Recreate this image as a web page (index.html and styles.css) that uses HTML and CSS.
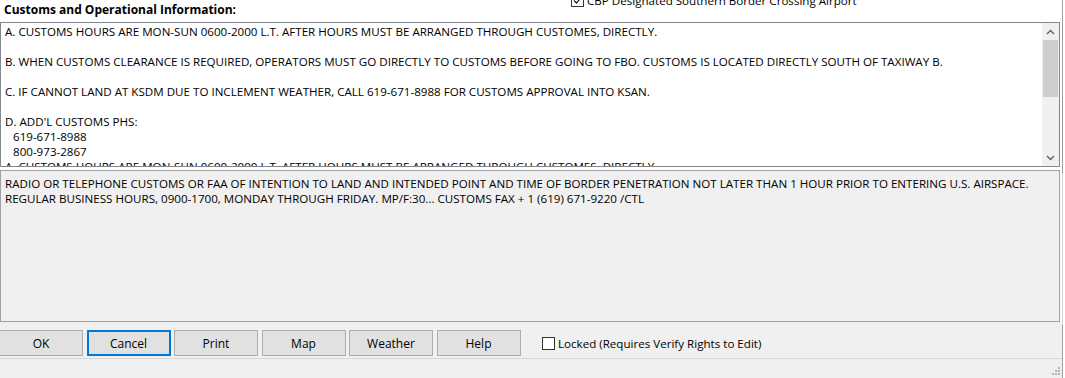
FILE: index.html
```html
<!DOCTYPE html>
<html>
<head>
<meta charset="utf-8">
<link rel="stylesheet" href="styles.css">
</head>
<body>
<div class="window">
  <div class="header">
    <span class="title">Customs and Operational Information:</span>
    <label class="cbp">
      <span class="box"><svg width="11" height="11" viewBox="0 0 11 11"><path d="M2 5.5 L4.5 8 L9 2.5" fill="none" stroke="#222" stroke-width="1.2"/></svg></span>
      <span>CBP Designated Southern Border Crossing Airport</span>
    </label>
  </div>
  <div class="memo">
    <div class="memo-text">
      <div class="line">A. CUSTOMS HOURS ARE MON-SUN 0600-2000 L.T. AFTER HOURS MUST BE ARRANGED THROUGH CUSTOMES, DIRECTLY.</div>
      <div class="line">&nbsp;</div>
      <div class="line">B. WHEN CUSTOMS CLEARANCE IS REQUIRED, OPERATORS MUST GO DIRECTLY TO CUSTOMS BEFORE GOING TO FBO. CUSTOMS IS LOCATED DIRECTLY SOUTH OF TAXIWAY B.</div>
      <div class="line">&nbsp;</div>
      <div class="line">C. IF CANNOT LAND AT KSDM DUE TO INCLEMENT WEATHER, CALL 619-671-8988 FOR CUSTOMS APPROVAL INTO KSAN.</div>
      <div class="line">&nbsp;</div>
      <div class="line">D. ADD'L CUSTOMS PHS:</div>
      <div class="line indent">619-671-8988</div>
      <div class="line indent">800-973-2867</div>
      <div class="line">A. CUSTOMS HOURS ARE MON-SUN 0600-2000 L.T. AFTER HOURS MUST BE ARRANGED THROUGH CUSTOMES, DIRECTLY.</div>
    </div>
    <div class="scrollbar">
      <div class="arrow"><svg width="9" height="6" viewBox="0 0 9 6"><path d="M1 5 L4.5 1.5 L8 5" fill="none" stroke="#606060" stroke-width="1.4"/></svg></div>
      <div class="track"><div class="thumb"></div></div>
      <div class="arrow"><svg width="9" height="6" viewBox="0 0 9 6"><path d="M1 1 L4.5 4.5 L8 1" fill="none" stroke="#606060" stroke-width="1.4"/></svg></div>
    </div>
  </div>
  <div class="remarks-wrap">
    <div class="remarks">
      <div class="line">RADIO OR TELEPHONE CUSTOMS OR FAA OF INTENTION TO LAND AND INTENDED POINT AND TIME OF BORDER PENETRATION NOT LATER THAN 1 HOUR PRIOR TO ENTERING U.S. AIRSPACE.</div>
      <div class="line">REGULAR BUSINESS HOURS, 0900-1700, MONDAY THROUGH FRIDAY. MP/F:30... CUSTOMS FAX + 1 (619) 671-9220 /CTL</div>
    </div>
  </div>
  <div class="buttons">
    <button class="btn">OK</button>
    <button class="btn focus">Cancel</button>
    <button class="btn">Print</button>
    <button class="btn">Map</button>
    <button class="btn">Weather</button>
    <button class="btn">Help</button>
    <label class="locked"><span class="box"></span><span>Locked (Requires Verify Rights to Edit)</span></label>
  </div>
  <div class="status">
    <div class="grip">
      <i class="d1"></i><i class="d2"></i><i class="d3"></i><i class="d4"></i><i class="d5"></i><i class="d6"></i>
    </div>
  </div>
</div>
</body>
</html>
```
FILE: styles.css
```css
html, body {
  margin: 0;
  padding: 0;
  background: #ffffff;
}
body {
  width: 1065px;
  height: 378px;
  overflow: hidden;
  font-family: "Open Sans", "Noto Sans", sans-serif;
  font-size: 11.6px;
  color: #000;
}
.window {
  width: 1062px;
  height: 378px;
  border-right: 1px solid #a0a0a0;
  display: flex;
  flex-direction: column;
}
.header {
  height: 22px;
  flex: none;
  display: flex;
  align-items: flex-start;
  background: #fff;
}
.title {
  font-weight: bold;
  font-size: 12px;
  margin-left: 4px;
  margin-top: 2px;
  line-height: 16px;
  width: 567px;
}
.cbp {
  display: flex;
  align-items: center;
  margin-top: -7px;
  line-height: 15px;
}
.cbp .box {
  width: 11px;
  height: 11px;
  border: 1px solid #333;
  margin-right: 3px;
  display: flex;
  background: #fff;
}
.memo {
  flex: none;
  height: 143px;
  width: 1058px;
  border: 1px solid #828790;
  background: #fff;
  display: flex;
}
.memo-text {
  flex: 1;
  padding: 1px 0 0 4px;
  overflow: hidden;
}
.line {
  line-height: 15px;
  white-space: nowrap;
}
.indent {
  padding-left: 8px;
}
.scrollbar {
  width: 17px;
  background: #f0f0f0;
  display: flex;
  flex-direction: column;
}
.arrow {
  height: 17px;
  display: flex;
  align-items: center;
  justify-content: center;
}
.track {
  flex: 1;
  padding: 0 1px;
}
.thumb {
  height: 57px;
  background: #cdcdcd;
}
.remarks-wrap {
  flex: none;
  background: #fff;
  padding-top: 3px;
  width: 1062px;
}
.remarks {
  height: 145px;
  width: 1054px;
  border: 1px solid #a0a0a0;
  background: #f0f0f0;
  padding: 5px 0 0 4px;
  box-shadow: 1px 1px 0 #fff, 2px 2px 0 #fff, 3px 3px 0 #d4d4d4;
}
.buttons {
  flex: none;
  height: 28px;
  padding-top: 8px;
  background: #f0f0f0;
  display: flex;
  align-items: flex-start;
  gap: 3.5px;
  margin-left: -1px;
}
.btn {
  width: 84px;
  height: 26px;
  margin: 0;
  padding: 0;
  background: #e1e1e1;
  border: 1px solid #adadad;
  font-family: inherit;
  font-size: 12px;
  color: #000;
}
.btn.focus {
  border: 2px solid #0078d7;
}
.locked {
  display: flex;
  align-items: center;
  height: 26px;
  margin-left: 18px;
}
.locked .box {
  width: 11px;
  height: 11px;
  border: 1px solid #333;
  background: #fff;
  margin-right: 3px;
}
.status {
  flex: 1;
  border-top: 1px solid #d7d7d7;
  background: #f0f0f0;
  position: relative;
}
.grip {
  position: absolute;
  right: 2px;
  bottom: 3px;
  width: 8px;
  height: 8px;
}
.grip i {
  position: absolute;
  width: 2px;
  height: 2px;
  background: #b4b4b4;
}
.grip .d1 { right: 0; bottom: 6px; }
.grip .d2 { right: 0; bottom: 3px; }
.grip .d3 { right: 3px; bottom: 3px; }
.grip .d4 { right: 0; bottom: 0; }
.grip .d5 { right: 3px; bottom: 0; }
.grip .d6 { right: 6px; bottom: 0; }
```
